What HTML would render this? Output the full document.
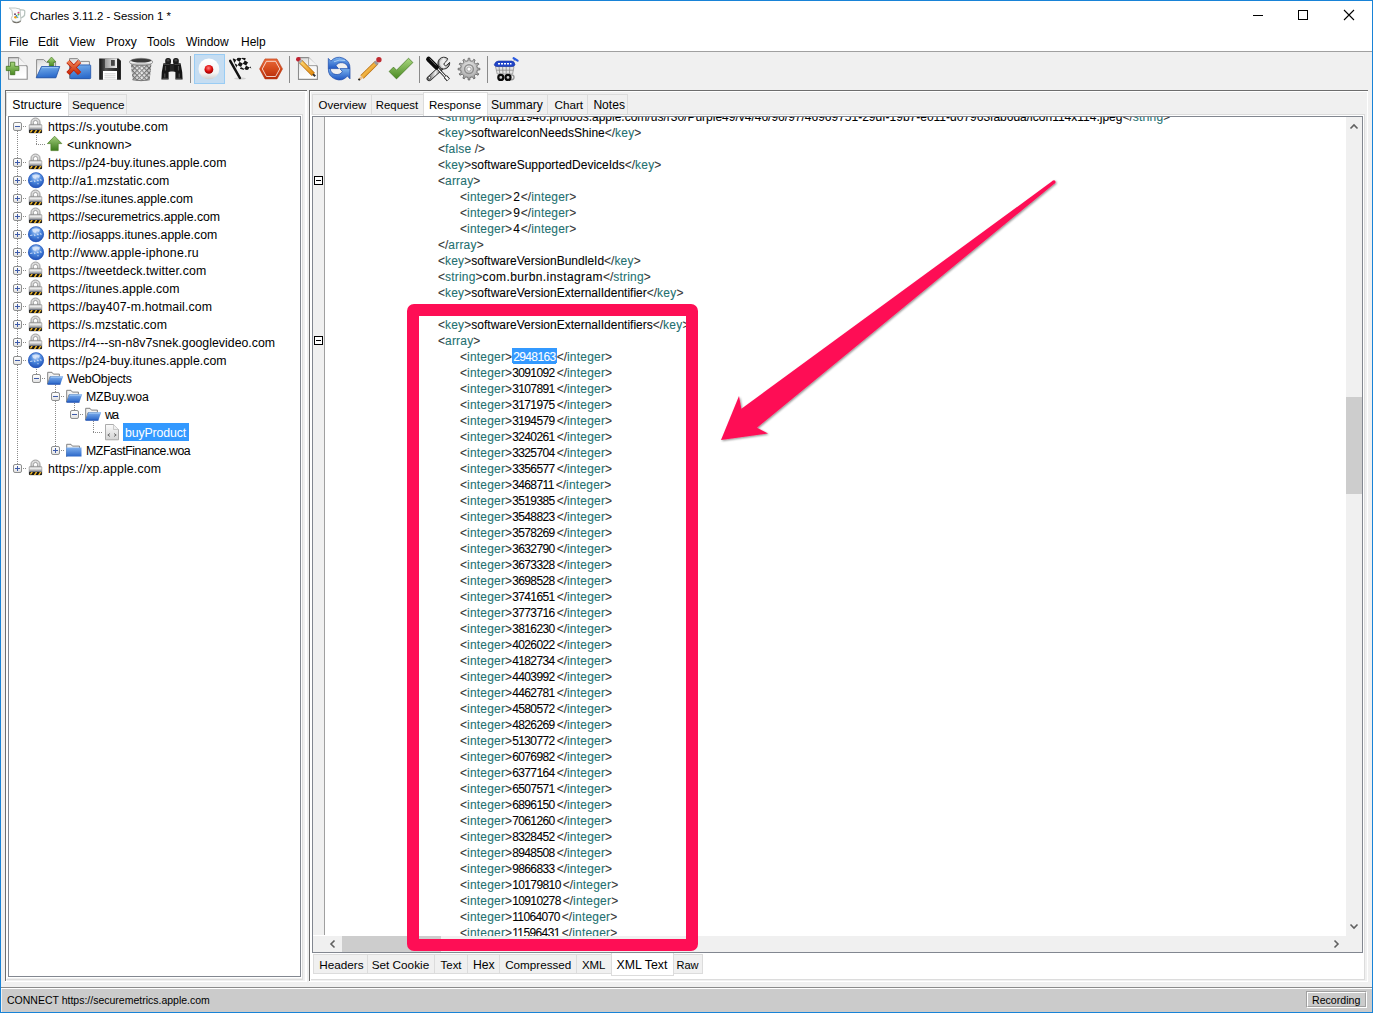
<!DOCTYPE html>
<html><head><meta charset="utf-8">
<style>
*{margin:0;padding:0;box-sizing:border-box}
html,body{width:1373px;height:1013px;overflow:hidden;background:#fff;font-family:"Liberation Sans",sans-serif;color:#000}
.a{position:absolute}
.t{position:absolute;white-space:pre;line-height:16px}
#win{position:absolute;left:0;top:0;width:1373px;height:1013px;border:1px solid #1883d7;background:#f0f0f0}
#title{position:absolute;left:1px;top:1px;width:1371px;height:50px;background:#fff}
.sep{position:absolute;width:1px;background:#8c8c8c}
.tr{font-size:12.3px;line-height:18px}
.x{font-size:12px;line-height:16px;color:#000;-webkit-text-stroke:0.08px currentColor}
.x b{font-weight:normal;color:#333}
.x i{font-style:normal;color:#237070;letter-spacing:0.2px}
.x u{text-decoration:none;letter-spacing:-0.6px;margin-right:2px}
.x u.sel{background:#3399ff;color:#fff;display:inline-block;height:15px;line-height:16px;vertical-align:top;padding:0 1px 0 1px;margin-right:0;box-shadow:0 -1px 0 #3399ff;background-clip:content-box,padding-box}
.exp{width:9px;height:9px;border:1px solid #8e8f8f;border-radius:2px;background:linear-gradient(#fff,#e3e3e3)}
.exp:before{content:"";position:absolute;left:1px;top:3px;width:5px;height:1px;background:#3e5ba9}
.plus:after{content:"";position:absolute;left:3px;top:1px;width:1px;height:5px;background:#3e5ba9}
.tab{background:#f0f0f0;border:1px solid #dcdcdc;border-bottom:none}
.gbox{width:9px;height:9px;border:1px solid #000;background:#fff}
.gbox:before{content:"";position:absolute;left:1px;top:3px;width:5px;height:1px;background:#000}
</style></head><body>
<svg width="0" height="0" style="position:absolute">
<defs>
<linearGradient id="gLockBody" x1="0" y1="0" x2="0" y2="1"><stop offset="0" stop-color="#a8a8a8"/><stop offset="0.22" stop-color="#f0f0f0"/><stop offset="0.45" stop-color="#b4b4b4"/><stop offset="0.6" stop-color="#7a808c"/><stop offset="1" stop-color="#333"/></linearGradient>
<radialGradient id="gGlobe" cx="0.5" cy="0.3" r="0.75"><stop offset="0" stop-color="#c8dcf8"/><stop offset="0.45" stop-color="#4a86dc"/><stop offset="1" stop-color="#1a48b0"/></radialGradient>
<linearGradient id="gArrow" x1="0" y1="0" x2="0" y2="1"><stop offset="0" stop-color="#a3cf7d"/><stop offset="1" stop-color="#3b7a1c"/></linearGradient>
<linearGradient id="gFold" x1="0" y1="0" x2="0" y2="1"><stop offset="0" stop-color="#7fb0ee"/><stop offset="1" stop-color="#2a66c8"/></linearGradient>
<linearGradient id="gPaper" x1="0" y1="0" x2="0" y2="1"><stop offset="0" stop-color="#fbfbfb"/><stop offset="1" stop-color="#d4d4d4"/></linearGradient>
<symbol id="i-lock" viewBox="0 0 18 18">
<path d="M4 8.2V5A4.5 4 0 0 1 13 5V8.2H10.6V5.6A2.1 2.1 0 0 0 6.4 5.6V8.2Z" fill="#dadada" stroke="#8e8e8e" stroke-width="0.8"/>
<rect x="2.2" y="7.4" width="12.6" height="8.6" rx="1" fill="url(#gLockBody)" stroke="#8a8a8a" stroke-width="0.6"/>
<rect x="2.2" y="12.9" width="12.6" height="3.1" fill="#151515"/>
<path d="M2.6 15.6L4.2 12.9H5.9L4.3 15.6ZM6.8 16L8.6 12.9H10.3L8.5 16ZM11 16L12.8 12.9H14.5L12.7 16Z" fill="#f2b82a"/>
</symbol>
<symbol id="i-globe" viewBox="0 0 18 18">
<circle cx="9" cy="9.2" r="7.8" fill="url(#gGlobe)"/>
<path d="M5 4.5Q9 2.5 13 4.5L12 7L9.5 6L8.5 8L6 7Z" fill="#e4eefc" opacity="0.75"/>
<path d="M3.2 10.5L5.5 10M7 9.5L8.2 11M10.2 9L11.5 10M13 8.5L14.5 9.5M10.5 12.5L11.5 13" stroke="#eaf2fe" stroke-width="1.2" opacity="0.8"/>
<circle cx="9" cy="9.2" r="7.6" fill="none" stroke="#2050b8" stroke-width="0.6"/>
</symbol>
<symbol id="i-arrow" viewBox="0 0 18 18">
<path d="M8.6 1.2L1.4 8.6H4.9V15.6H12.2V8.6H15.8Z" fill="url(#gArrow)" stroke="#4b7d22" stroke-width="0.7" stroke-linejoin="round"/>
</symbol>
<symbol id="i-fopen" viewBox="0 0 18 18">
<path d="M1.7 15V3.3H6L7.4 5.1H13.4V7.6H4Z" fill="#f2f2f2" stroke="#767676" stroke-width="0.9"/>
<path d="M1.5 15.2L4.4 7.3H17.2L14.4 15.2Z" fill="url(#gFold)"/><path d="M1.5 15.2H14.4" stroke="#1d4fb0" stroke-width="1"/><path d="M5 8.3H16" stroke="#c0dcfa" stroke-width="0.7" opacity="0.8"/>
</symbol>
<symbol id="i-fclosed" viewBox="0 0 18 18">
<path d="M1.7 15.5V3.3H6L7.4 5.1H14.5V7.6H1.7Z" fill="#f2f2f2" stroke="#767676" stroke-width="0.9"/>
<rect x="1.2" y="6.5" width="15.3" height="9" fill="url(#gFold)"/>
</symbol>
<symbol id="i-doc" viewBox="0 0 18 18">
<path d="M2.5 1.5H10.5L15.5 6.5V16.8H2.5Z" fill="url(#gPaper)" stroke="#a3a3a3" stroke-width="0.9"/>
<path d="M10.5 1.5V6.5H15.5" fill="#eee" stroke="#b0b0b0" stroke-width="0.6"/>
<path d="M7 10.5L4.8 12L7 13.5M11 10.5L13.2 12L11 13.5" fill="none" stroke="#555" stroke-width="0.8"/>
</symbol>
</defs></svg>

<div id="win"></div>
<div id="title"></div>
<svg class="a" style="left:5px;top:3px" width="25" height="25" viewBox="0 0 25 25">
<path d="M4.2 5L7 7.5L7.5 12.5L6.3 15.5L7.5 18Q12 20.5 16 17.5L15.5 12L15 6Q11 4.5 4.2 5Z" fill="#fbfbfb" stroke="#b8c0bc" stroke-width="0.9"/>
<path d="M15 7Q20 6.5 19.8 8.5L19.5 12.5Q18 14 16 15" fill="none" stroke="#b8c4bf" stroke-width="1.3"/>
<path d="M7.2 17.5Q11.5 20.8 16 17.5L15.5 19Q11.5 21.5 7.8 19.2Z" fill="#6e6a62"/>
<circle cx="10.5" cy="14.3" r="1.3" fill="#f0a010"/>
<circle cx="11.5" cy="12.8" r="0.9" fill="#2a7ad0"/>
<circle cx="13.5" cy="9.8" r="1" fill="#e04080"/>
<circle cx="13.5" cy="11.5" r="0.9" fill="#60c040"/>
<circle cx="10" cy="11.2" r="0.9" fill="#603050"/>
<circle cx="12.6" cy="14.3" r="0.8" fill="#40b0c0"/>
</svg>
<!-- title text -->
<div class="t" style="left:30px;top:8px;font-size:11.4px">Charles 3.11.2 - Session 1 *</div>
<!-- menu -->
<div class="t" style="left:9px;top:34px;font-size:12px">File</div>
<div class="t" style="left:38px;top:34px;font-size:12px">Edit</div>
<div class="t" style="left:69px;top:34px;font-size:12px">View</div>
<div class="t" style="left:106px;top:34px;font-size:12px">Proxy</div>
<div class="t" style="left:147px;top:34px;font-size:12px">Tools</div>
<div class="t" style="left:186px;top:34px;font-size:12px">Window</div>
<div class="t" style="left:241px;top:34px;font-size:12px">Help</div>
<div class="a" style="left:1px;top:51px;width:1371px;height:1px;background:#a0a0a0"></div>


<svg class="a" style="left:0;top:52px" width="530" height="36" viewBox="0 52 530 36">
<defs>
<linearGradient id="tgPaper" x1="0" y1="0" x2="0.3" y2="1"><stop offset="0" stop-color="#d8d8d8"/><stop offset="0.5" stop-color="#f4f4f4"/><stop offset="1" stop-color="#ffffff"/></linearGradient>
<linearGradient id="tgGreen" x1="0" y1="0" x2="0" y2="1"><stop offset="0" stop-color="#a8d67e"/><stop offset="1" stop-color="#4a8a22"/></linearGradient>
<linearGradient id="tgBlue" x1="0" y1="0" x2="0.2" y2="1"><stop offset="0" stop-color="#78b0ec"/><stop offset="1" stop-color="#2d6ccc"/></linearGradient>
<linearGradient id="tgRed" x1="0" y1="0" x2="0" y2="1"><stop offset="0" stop-color="#f08050"/><stop offset="1" stop-color="#c82a0a"/></linearGradient>
<linearGradient id="tgDark" x1="0" y1="0" x2="1" y2="0"><stop offset="0" stop-color="#111"/><stop offset="0.3" stop-color="#555"/><stop offset="0.7" stop-color="#333"/><stop offset="1" stop-color="#111"/></linearGradient>
<linearGradient id="tgShut" x1="0" y1="0" x2="1" y2="0"><stop offset="0" stop-color="#9a9a9a"/><stop offset="1" stop-color="#f0f0f0"/></linearGradient>
<linearGradient id="tgMetal" x1="0" y1="0" x2="1" y2="0"><stop offset="0" stop-color="#777"/><stop offset="0.5" stop-color="#eee"/><stop offset="1" stop-color="#666"/></linearGradient>
<linearGradient id="tgWhite" x1="0" y1="0" x2="0" y2="1"><stop offset="0" stop-color="#ffffff"/><stop offset="0.7" stop-color="#f4f4f4"/><stop offset="1" stop-color="#cfcfcf"/></linearGradient>
<linearGradient id="tgRim" x1="0" y1="0" x2="0" y2="1"><stop offset="0" stop-color="#777"/><stop offset="0.55" stop-color="#f4f4f4"/><stop offset="1" stop-color="#8a8a8a"/></linearGradient>
<radialGradient id="tgRedDot" cx="0.45" cy="0.35" r="0.6"><stop offset="0" stop-color="#ff8080"/><stop offset="0.6" stop-color="#e01010"/><stop offset="1" stop-color="#a00000"/></radialGradient>
<linearGradient id="tgHex" x1="0" y1="0" x2="0" y2="1"><stop offset="0" stop-color="#ea6a3a"/><stop offset="0.5" stop-color="#d44a1c"/><stop offset="1" stop-color="#b52a08"/></linearGradient>
<linearGradient id="tgRefresh" x1="0" y1="0" x2="0" y2="1"><stop offset="0" stop-color="#7ab2ee"/><stop offset="1" stop-color="#2058c4"/></linearGradient>
<linearGradient id="tgPencil" x1="0" y1="0" x2="1" y2="1"><stop offset="0" stop-color="#ffd870"/><stop offset="1" stop-color="#e08a10"/></linearGradient>
<radialGradient id="tgGear" cx="0.5" cy="0.4" r="0.6"><stop offset="0" stop-color="#f0f0f0"/><stop offset="1" stop-color="#9a9a9a"/></radialGradient>
<pattern id="tgChk" width="7.6" height="7.6" patternUnits="userSpaceOnUse" patternTransform="translate(233 58) rotate(30)"><rect width="7.6" height="7.6" fill="#f6f6f6"/><rect width="3.8" height="3.8" fill="#151515"/><rect x="3.8" y="3.8" width="3.8" height="3.8" fill="#151515"/></pattern>
<pattern id="tgMesh" width="3.4" height="3.4" patternUnits="userSpaceOnUse" patternTransform="rotate(45)"><rect width="3.4" height="3.4" fill="#f2f2f2"/><rect width="1.1" height="3.4" fill="#5a5a5a"/><rect width="3.4" height="1.1" fill="#5a5a5a"/></pattern>
</defs>
<!-- 1 new doc -->
<path d="M8.6 57.6H18.5L27.2 66.7V79.3H8.6Z" fill="url(#tgPaper)" stroke="#8c8c8c" stroke-width="1.1"/>
<path d="M18.5 57.6V65.6H27.2" fill="#f4f4f4" stroke="#9a9a9a" stroke-width="0.9"/>
<path d="M10.4 62.2H14.8V66.3H18.9V70.6H14.8V74.7H10.4V70.6H6.3V66.3H10.4Z" fill="url(#tgGreen)" stroke="#3f741d" stroke-width="0.8"/>
<!-- 2 open folder -->
<path d="M36.6 77.5V59.6H43.6L46.7 62.4H55.6V77.5Z" fill="url(#tgPaper)" stroke="#8c8c8c" stroke-width="1"/>
<path d="M51.5 57L47 62H49.3V66H53.8V62H56Z" fill="url(#tgGreen)" stroke="#3f741d" stroke-width="0.6"/>
<path d="M36.2 77.8L41.5 66.5H59.8L55.9 77.8Z" fill="url(#tgBlue)" stroke="#1f52a8" stroke-width="0.8"/>
<path d="M42 67.6H58.2" stroke="#a8d0f8" stroke-width="0.8"/>
<!-- 3 close folder -->
<path d="M69.5 78.5V58.6H77.4L80.3 61.4H89.4V78.5Z" fill="url(#tgPaper)" stroke="#8c8c8c" stroke-width="1"/>
<rect x="70.3" y="64.9" width="20.4" height="13.8" rx="0.8" fill="url(#tgBlue)" stroke="#1f52a8" stroke-width="0.8"/>
<path d="M68 61.5L79.5 73.5M79.5 61.5L68 73.5" stroke="#b81c0a" stroke-width="4.6"/>
<path d="M68 61.5L79.5 73.5M79.5 61.5L68 73.5" stroke="url(#tgRed)" stroke-width="3.2"/>
<!-- 4 floppy -->
<path d="M99.2 58.4H118.5L120.9 60.8V79.8H99.2Z" fill="url(#tgDark)"/>
<rect x="105" y="58.4" width="12" height="9.6" fill="url(#tgShut)"/>
<rect x="111" y="60" width="3.8" height="5.8" fill="#444"/>
<rect x="103" y="71" width="14" height="8.8" fill="#fff"/>
<path d="M104.5 73.8H115.5M104.5 75.8H115.5M104.5 77.8H115.5" stroke="#aaa" stroke-width="0.6"/>
<!-- 5 trash -->
<path d="M131 64.5L132.6 79.8Q141 81.6 149.7 79.8L151.3 64.5Z" fill="url(#tgMesh)"/>
<path d="M131 64.5L132.6 79.8Q141 81.6 149.7 79.8L151.3 64.5Z" fill="url(#tgMetal)" opacity="0.35"/>
<path d="M132.6 79.8Q141 81.6 149.7 79.8" fill="none" stroke="#777" stroke-width="1"/>
<ellipse cx="141.1" cy="62" rx="11.7" ry="3.7" fill="url(#tgRim)" stroke="#707070" stroke-width="0.6"/>
<ellipse cx="141.1" cy="60.6" rx="10" ry="1.9" fill="#3a3a3a"/>
<!-- 6 binoculars -->
<rect x="165.2" y="58" width="5.8" height="6.5" rx="2.5" fill="#1e1e1e"/>
<rect x="173" y="58" width="5.8" height="6.5" rx="2.5" fill="#1e1e1e"/>
<circle cx="168.1" cy="60.3" r="1.3" fill="#555" opacity="0.7"/>
<circle cx="175.9" cy="60.3" r="1.3" fill="#555" opacity="0.7"/>
<path d="M163.4 63.2H170.2L170.3 71.5L168.6 72V79.6H161.4L161.8 72Z" fill="#161616"/>
<path d="M173.8 63.2H180.6L182.2 72L182.6 79.6H175.4V72L173.7 71.5Z" fill="#161616"/>
<rect x="169.8" y="64" width="4.4" height="7.5" fill="#262626"/>
<path d="M165.5 66V70.5M178.5 66V70.5M164.8 73.5V77.5M179.2 73.5V77.5" stroke="#5a5a5a" stroke-width="1.2" opacity="0.8"/>
<path d="M163.5 64.4H169.5M174.5 64.4H180.5M162.5 78.4H168M176 78.4H181.5" stroke="#6a6a6a" stroke-width="0.6"/>
<!-- separators -->
<rect x="190" y="56" width="1" height="27" fill="#8a8a8a"/>
<rect x="289" y="56" width="1" height="27" fill="#8a8a8a"/>
<rect x="419" y="56" width="1" height="27" fill="#8a8a8a"/>
<rect x="487" y="56" width="1" height="27" fill="#8a8a8a"/>
<!-- 7 record -->
<rect x="194.5" y="54.5" width="30" height="29" fill="#c5ddf2" stroke="#99ccf4" stroke-width="1"/>
<circle cx="208.9" cy="68.9" r="10.4" fill="url(#tgWhite)"/>
<circle cx="208.9" cy="69.4" r="4.4" fill="url(#tgRedDot)"/>
<!-- 8 flag -->
<ellipse cx="240" cy="78.5" rx="6" ry="1.2" fill="#000" opacity="0.12"/>
<path d="M232.5 58.5Q239 57 245.4 58.1L251.4 68.5Q247.5 70.5 244 70Q240 68.5 236.8 68.8Z" fill="url(#tgChk)"/>
<path d="M230.2 60.8L239.9 78" stroke="#111" stroke-width="2.5" stroke-linecap="round"/>
<!-- 9 hexagon -->
<path d="M259.6 68.9L265 58.9H277L282.5 68.9L277 78.9H265Z" fill="url(#tgHex)" stroke="#b83a14" stroke-width="0.6"/>
<path d="M262.3 68.9L266.4 61.3H275.6L279.8 68.9L275.6 76.5H266.4Z" fill="none" stroke="#fff" stroke-width="0.9" opacity="0.85"/>
<!-- 10 edit doc -->
<path d="M298.5 57.6H308.6L317.4 66.7V79.4H298.5Z" fill="url(#tgPaper)" stroke="#8c8c8c" stroke-width="1.1"/>
<path d="M308.6 57.6V65.6H317.4" fill="#f4f4f4" stroke="#9a9a9a" stroke-width="0.9"/>
<path d="M300.3 61.3L313.3 74.4" stroke="#b86a08" stroke-width="4.4"/>
<path d="M300.3 61.3L313.3 74.4" stroke="url(#tgPencil)" stroke-width="3"/>
<path d="M313 74.1L315.2 76.3" stroke="#333" stroke-width="2"/>
<circle cx="298.4" cy="59.3" r="2.4" fill="#c02030"/>
<path d="M299.6 60.5L301.3 62.2" stroke="#aaa" stroke-width="3.6"/>
<!-- 11 refresh -->
<path d="M328.3 68.6V58.4L330.9 61.1A10.9 10.9 0 0 1 350 68.6H348C348 61.5 337.5 61 336 65.8L338.5 68.6Z" fill="url(#tgRefresh)" stroke="#1846a8" stroke-width="0.7" stroke-linejoin="round"/>
<path d="M350 68.6V78.8L347.4 76.1A10.9 10.9 0 0 1 328.3 68.6H330.3C330.3 75.7 340.8 76.2 342.3 71.4L339.8 68.6Z" fill="url(#tgRefresh)" stroke="#1846a8" stroke-width="0.7" stroke-linejoin="round"/>
<path d="M334 61.8Q339 59 345 60.5" fill="none" stroke="#b8d8fa" stroke-width="1" opacity="0.8"/>
<!-- 12 pencil -->
<path d="M376.6 62.6L362 77" stroke="#b86a08" stroke-width="4.6"/>
<path d="M376.6 62.6L362 77" stroke="url(#tgPencil)" stroke-width="3.2"/>
<path d="M362.3 76.7L359.2 79.6" stroke="#e8c090" stroke-width="2.6"/>
<path d="M359.8 79L358.5 80.2" stroke="#222" stroke-width="1.8"/>
<path d="M377.2 62L375.2 64" stroke="#9a9a9a" stroke-width="4.2"/>
<circle cx="378.9" cy="59.8" r="2.7" fill="#c02a30"/>
<!-- 13 check -->
<path d="M389.1 71.5L393.5 67.1L396.5 70.2L408.5 58.2L412.9 62.5L396.5 78.9Z" fill="url(#tgGreen)" stroke="#3f741d" stroke-width="0.7"/>
<!-- 14 tools -->
<mask id="wrm" maskUnits="userSpaceOnUse" x="420" y="52" width="40" height="36"><rect x="420" y="52" width="40" height="36" fill="#fff"/><path d="M-1.6 -14V0A1.6 1.6 0 0 0 1.6 0V-14Z" transform="translate(445.6 64.1) rotate(45)" fill="#000"/></mask>
<path d="M441.6 67.4L429.2 78.6" stroke="#222" stroke-width="5.2" stroke-linecap="round"/>
<path d="M441.6 67.4L429.2 78.6" stroke="url(#tgMetal)" stroke-width="3.6" stroke-linecap="round"/>
<circle cx="429.5" cy="77.7" r="1.2" fill="#fff" stroke="#333" stroke-width="0.7"/>
<g mask="url(#wrm)"><circle cx="443.8" cy="63.1" r="5.9" fill="url(#tgMetal)" stroke="#222" stroke-width="0.9"/><circle cx="443.8" cy="63.1" r="4.2" fill="#f4f4f4" opacity="0.7"/></g>
<path d="M-1.6 -4.6V0A1.6 1.6 0 0 0 1.6 0V-4.2" transform="translate(445.6 64.1) rotate(45)" fill="none" stroke="#222" stroke-width="0.9"/>
<path d="M437 67.6L446.3 77.6" stroke="#111" stroke-width="2.8"/>
<path d="M437 67.6L446.3 77.6" stroke="#fff" stroke-width="1.1"/>
<path d="M445.4 76.6L448.4 79.8" stroke="#111" stroke-width="4"/>
<path d="M445.6 76.8L448.2 79.6" stroke="#fff" stroke-width="2.3"/>
<path d="M428.6 59.2L436.4 67" stroke="#0a0a0a" stroke-width="5" stroke-linecap="round"/>
<path d="M429.6 58.6L436.2 65.4" stroke="#777" stroke-width="0.9"/>
<!-- 15 gear -->
<g transform="translate(469 69.1)">
<path d="M-2.17 -8.11L-0.97 -8.34L-0.80 -10.87L0.80 -10.87L0.97 -8.34L2.17 -8.11L3.34 -7.71L4.74 -9.81L6.13 -9.02L5.01 -6.74L5.94 -5.94L6.74 -5.01L9.02 -6.13L9.81 -4.74L7.71 -3.34L8.11 -2.17L8.34 -0.97L10.87 -0.80L10.87 0.80L8.34 0.97L8.11 2.17L7.71 3.34L9.81 4.74L9.02 6.13L6.74 5.01L5.94 5.94L5.01 6.74L6.13 9.02L4.74 9.81L3.34 7.71L2.17 8.11L0.97 8.34L0.80 10.87L-0.80 10.87L-0.97 8.34L-2.17 8.11L-3.34 7.71L-4.74 9.81L-6.13 9.02L-5.01 6.74L-5.94 5.94L-6.74 5.01L-9.02 6.13L-9.81 4.74L-7.71 3.34L-8.11 2.17L-8.34 0.97L-10.87 0.80L-10.87 -0.80L-8.34 -0.97L-8.11 -2.17L-7.71 -3.34L-9.81 -4.74L-9.02 -6.13L-6.74 -5.01L-5.94 -5.94L-5.01 -6.74L-6.13 -9.02L-4.74 -9.81L-3.34 -7.71Z" fill="url(#tgGear)" stroke="#6a6a6a" stroke-width="0.9"/>
<circle r="4.4" fill="none" stroke="#8f8f8f" stroke-width="1.5"/>
<circle r="2.1" fill="#fff" stroke="#7a7a7a" stroke-width="0.6"/>
</g>
<!-- 16 cart -->
<path d="M495.5 66.4L497.2 74H512.6L514 66.4Z" fill="#e4e4e4" stroke="#888" stroke-width="0.7"/>
<path d="M499 66.5L499.8 74M502.6 66.5L503 74M506.2 66.5L506.2 74M509.8 66.5L509.4 74M496.3 70.2H513.3" stroke="#8a8a8a" stroke-width="0.8"/>
<path d="M494.2 64.8Q495.5 61 498.5 61H511.6Q514.6 61 515 64.8Q514.5 66.5 512 66.5H497Q494.5 66.5 494.2 64.8Z" fill="#2045c8" stroke="#1530a0" stroke-width="0.6"/>
<path d="M498 63.8H511.5" stroke="#fff" stroke-width="1.5" stroke-dasharray="2 1"/>
<path d="M513.5 61L515.3 59.3" stroke="#888" stroke-width="1"/>
<path d="M513.6 58.2L517.6 60.6" stroke="#2a5ae0" stroke-width="2.2" stroke-linecap="round"/>
<circle cx="511.6" cy="77.3" r="2.4" fill="none" stroke="#999" stroke-width="1.4"/>
<circle cx="500.8" cy="77.4" r="2.5" fill="#ccc" stroke="#0a0a0a" stroke-width="2.2"/>
<circle cx="508" cy="77.4" r="2.5" fill="#ccc" stroke="#0a0a0a" stroke-width="2.2"/>
</svg>

<!-- LEFT PANEL -->
<div class="a" style="left:5px;top:90px;width:302px;height:1px;background:#6d6d6d"></div>
<div class="a" style="left:5px;top:90px;width:1px;height:891px;background:#6d6d6d"></div>
<div class="a" style="left:305px;top:91px;width:2px;height:891px;background:#fff"></div>
<div class="a" style="left:5px;top:981px;width:302px;height:1px;background:#fff"></div>
<div class="a" style="left:6px;top:91px;width:299px;height:1px;background:#fff"></div>
<div class="a" style="left:6px;top:91px;width:1px;height:890px;background:#fff"></div>
<!-- tab content border -->
<div class="a" style="left:6px;top:114px;width:297px;height:866px;border:1px solid #dcdcdc;border-left-color:#fff;border-top-color:#dcdcdc"></div>
<div class="a" style="left:7px;top:115px;width:295px;height:863px;border:1px solid #fff;border-right-color:#fff"></div>
<!-- tabs -->
<div class="a" style="left:7px;top:115px;width:295px;height:1px;background:#fff"></div>
<div class="a" style="left:68px;top:94px;width:59px;height:21px;background:#f0f0f0;border:1px solid #dcdcdc"></div>
<div class="a" style="left:6px;top:92px;width:63px;height:24px;background:#fff;border:1px solid #dcdcdc;border-bottom:none"></div>
<div class="t" style="left:12.3px;top:97px;font-size:12.23px">Structure</div>
<div class="t" style="left:71.9px;top:97px;font-size:11.69px">Sequence</div>
<!-- tree box -->
<div class="a" style="left:8px;top:116px;width:293px;height:861px;background:#fff;border:1px solid #828790"></div>

<!-- RIGHT PANEL -->
<div class="a" style="left:309px;top:90px;width:1059px;height:1px;background:#6d6d6d"></div>
<div class="a" style="left:309px;top:90px;width:1px;height:891px;background:#6d6d6d"></div>
<div class="a" style="left:1367px;top:91px;width:1px;height:891px;background:#fff"></div>
<div class="a" style="left:309px;top:981px;width:1059px;height:1px;background:#fff"></div>
<div class="a" style="left:310px;top:91px;width:1057px;height:1px;background:#fff"></div>
<div class="a" style="left:310px;top:91px;width:1px;height:890px;background:#fff"></div>
<div class="a" style="left:311px;top:114px;width:1054px;height:866px;border:1px solid #dcdcdc;border-left-color:#fff"></div>
<!-- content box -->
<div class="a" style="left:312px;top:116px;width:1051px;height:837px;background:#fff;border:1px solid #828790"></div>
<div class="a" style="left:1363px;top:116px;width:1px;height:838px;background:#fff"></div>
<div class="a" style="left:313px;top:117px;width:11px;height:818px;background:#f0f0f0"></div>
<div class="a" style="left:324px;top:117px;width:1px;height:818px;background:#a0a0a0"></div>
<!-- v scrollbar -->
<div class="a" style="left:1346px;top:117px;width:16px;height:835px;background:#f0f0f0"></div>
<div class="a" style="left:1346px;top:397px;width:16px;height:97px;background:#cdcdcd"></div>
<!-- h scrollbar -->
<div class="a" style="left:313px;top:936px;width:1033px;height:16px;background:#f0f0f0"></div>
<div class="a" style="left:342px;top:936px;width:99px;height:16px;background:#cdcdcd"></div>
<!-- bottom tab area -->
<div class="a" style="left:311px;top:953px;width:1054px;height:26px;background:#fff"></div>
<div class="a" style="left:311px;top:979px;width:1054px;height:1px;background:#dcdcdc"></div>
<div class="a" style="left:1364px;top:114px;width:1px;height:866px;background:#dcdcdc"></div>


<!-- right tabs -->
<div class="a tab" style="left:312px;top:94px;width:60px;height:21px;border-bottom:1px solid #dcdcdc"></div>
<div class="a tab" style="left:371px;top:94px;width:53px;height:21px;border-bottom:1px solid #dcdcdc"></div>
<div class="a tab" style="left:487px;top:94px;width:61px;height:21px;border-bottom:1px solid #dcdcdc"></div>
<div class="a tab" style="left:547px;top:94px;width:41px;height:21px;border-bottom:1px solid #dcdcdc"></div>
<div class="a tab" style="left:587px;top:94px;width:41px;height:21px;border-bottom:1px solid #dcdcdc"></div>
<div class="a" style="left:311px;top:115px;width:1053px;height:1px;background:#fff"></div>
<div class="a tab" style="left:423px;top:92px;width:65px;height:24px;background:#fff"></div>
<div class="t" style="left:318.6px;top:97px;font-size:11.45px">Overview</div>
<div class="t" style="left:375.8px;top:97px;font-size:11.39px">Request</div>
<div class="t" style="left:429.0px;top:97px;font-size:11.57px">Response</div>
<div class="t" style="left:490.9px;top:97px;font-size:12.15px">Summary</div>
<div class="t" style="left:554.5px;top:97px;font-size:11.71px">Chart</div>
<div class="t" style="left:593.4px;top:97px;font-size:12.09px">Notes</div>
<!-- bottom tabs -->
<div class="a tab" style="left:313px;top:954px;width:55px;height:20px;border-bottom:1px solid #dcdcdc"></div>
<div class="a tab" style="left:367px;top:954px;width:68px;height:20px;border-bottom:1px solid #dcdcdc"></div>
<div class="a tab" style="left:434px;top:954px;width:34px;height:20px;border-bottom:1px solid #dcdcdc"></div>
<div class="a tab" style="left:467px;top:954px;width:33px;height:20px;border-bottom:1px solid #dcdcdc"></div>
<div class="a tab" style="left:499px;top:954px;width:78px;height:20px;border-bottom:1px solid #dcdcdc"></div>
<div class="a tab" style="left:576px;top:954px;width:36px;height:20px;border-bottom:1px solid #dcdcdc"></div>
<div class="a tab" style="left:673px;top:954px;width:30px;height:20px;border-bottom:1px solid #dcdcdc"></div>
<div class="a tab" style="left:611px;top:953px;width:63px;height:23px;background:#fff;border-top:none;border-bottom:1px solid #dcdcdc"></div>
<div class="t" style="left:319.2px;top:957px;font-size:11.74px">Headers</div>
<div class="t" style="left:371.7px;top:957px;font-size:11.76px">Set Cookie</div>
<div class="t" style="left:440.6px;top:957px;font-size:11.41px">Text</div>
<div class="t" style="left:472.9px;top:957px;font-size:12.19px">Hex</div>
<div class="t" style="left:505.2px;top:957px;font-size:11.66px">Compressed</div>
<div class="t" style="left:581.9px;top:957px;font-size:11.45px">XML</div>
<div class="t" style="left:616.6px;top:957px;font-size:12.35px">XML Text</div>
<div class="t" style="left:676.4px;top:957px;font-size:11.09px">Raw</div>
<!-- gutter boxes -->
<div class="a gbox" style="left:314px;top:176px"></div>
<div class="a gbox" style="left:314px;top:336px"></div>
<!-- scroll arrows -->
<svg class="a" style="left:1346px;top:117px" width="16" height="18"><path d="M4.5 11.5L8 8L11.5 11.5" fill="none" stroke="#606060" stroke-width="1.6"/></svg>
<svg class="a" style="left:1346px;top:918px" width="16" height="18"><path d="M4.5 6.5L8 10L11.5 6.5" fill="none" stroke="#606060" stroke-width="1.6"/></svg>
<svg class="a" style="left:325px;top:936px" width="16" height="16"><path d="M9.5 4.5L6 8L9.5 11.5" fill="none" stroke="#606060" stroke-width="1.6"/></svg>
<svg class="a" style="left:1328px;top:936px" width="16" height="16"><path d="M6.5 4.5L10 8L6.5 11.5" fill="none" stroke="#606060" stroke-width="1.6"/></svg>
<!-- window controls -->
<div class="a" style="left:1253px;top:15px;width:10px;height:1px;background:#000"></div>
<div class="a" style="left:1298px;top:10px;width:10px;height:10px;border:1px solid #000"></div>
<svg class="a" style="left:1343px;top:9px" width="12" height="12"><path d="M1 1L11 11M11 1L1 11" stroke="#000" stroke-width="1.1"/></svg>

<!-- TREE -->
<div class="a" style="left:17px;top:131px;width:1px;height:333px;background:repeating-linear-gradient(#8a8a8a 0 1px,transparent 1px 2px)"></div>
<div class="a" style="left:36px;top:135px;width:1px;height:9px;background:repeating-linear-gradient(#8a8a8a 0 1px,transparent 1px 2px)"></div>
<div class="a" style="left:36px;top:367px;width:1px;height:7px;background:repeating-linear-gradient(#8a8a8a 0 1px,transparent 1px 2px)"></div>
<div class="a" style="left:55px;top:385px;width:1px;height:61px;background:repeating-linear-gradient(#8a8a8a 0 1px,transparent 1px 2px)"></div>
<div class="a" style="left:55px;top:385px;width:1px;height:61px;background:repeating-linear-gradient(#8a8a8a 0 1px,transparent 1px 2px)"></div>
<div class="a" style="left:74px;top:403px;width:1px;height:7px;background:repeating-linear-gradient(#8a8a8a 0 1px,transparent 1px 2px)"></div>
<div class="a" style="left:93px;top:421px;width:1px;height:11px;background:repeating-linear-gradient(#8a8a8a 0 1px,transparent 1px 2px)"></div>
<div class="a exp minus" style="left:13px;top:122px"></div>
<div class="a" style="left:23px;top:126px;width:4px;height:1px;background:repeating-linear-gradient(90deg,#8a8a8a 0 1px,transparent 1px 2px)"></div>
<svg class="a" style="left:27px;top:117px" width="18" height="18"><use href="#i-lock"/></svg>
<div class="t tr" style="left:48px;top:118px;letter-spacing:0.150px">https://s.youtube.com</div>
<div class="a" style="left:36px;top:144px;width:10px;height:1px;background:repeating-linear-gradient(90deg,#8a8a8a 0 1px,transparent 1px 2px)"></div>
<svg class="a" style="left:46px;top:135px" width="18" height="18"><use href="#i-arrow"/></svg>
<div class="t tr" style="left:67px;top:136px;letter-spacing:0.150px">&lt;unknown&gt;</div>
<div class="a exp plus" style="left:13px;top:158px"></div>
<div class="a" style="left:23px;top:162px;width:4px;height:1px;background:repeating-linear-gradient(90deg,#8a8a8a 0 1px,transparent 1px 2px)"></div>
<svg class="a" style="left:27px;top:153px" width="18" height="18"><use href="#i-lock"/></svg>
<div class="t tr" style="left:48px;top:154px;letter-spacing:0.052px">https://p24-buy.itunes.apple.com</div>
<div class="a exp plus" style="left:13px;top:176px"></div>
<div class="a" style="left:23px;top:180px;width:4px;height:1px;background:repeating-linear-gradient(90deg,#8a8a8a 0 1px,transparent 1px 2px)"></div>
<svg class="a" style="left:27px;top:171px" width="18" height="18"><use href="#i-globe"/></svg>
<div class="t tr" style="left:48px;top:172px;letter-spacing:0.081px">http://a1.mzstatic.com</div>
<div class="a exp plus" style="left:13px;top:194px"></div>
<div class="a" style="left:23px;top:198px;width:4px;height:1px;background:repeating-linear-gradient(90deg,#8a8a8a 0 1px,transparent 1px 2px)"></div>
<svg class="a" style="left:27px;top:189px" width="18" height="18"><use href="#i-lock"/></svg>
<div class="t tr" style="left:48px;top:190px;letter-spacing:-0.050px">https://se.itunes.apple.com</div>
<div class="a exp plus" style="left:13px;top:212px"></div>
<div class="a" style="left:23px;top:216px;width:4px;height:1px;background:repeating-linear-gradient(90deg,#8a8a8a 0 1px,transparent 1px 2px)"></div>
<svg class="a" style="left:27px;top:207px" width="18" height="18"><use href="#i-lock"/></svg>
<div class="t tr" style="left:48px;top:208px;letter-spacing:-0.053px">https://securemetrics.apple.com</div>
<div class="a exp plus" style="left:13px;top:230px"></div>
<div class="a" style="left:23px;top:234px;width:4px;height:1px;background:repeating-linear-gradient(90deg,#8a8a8a 0 1px,transparent 1px 2px)"></div>
<svg class="a" style="left:27px;top:225px" width="18" height="18"><use href="#i-globe"/></svg>
<div class="t tr" style="left:48px;top:226px;letter-spacing:-0.010px">http://iosapps.itunes.apple.com</div>
<div class="a exp plus" style="left:13px;top:248px"></div>
<div class="a" style="left:23px;top:252px;width:4px;height:1px;background:repeating-linear-gradient(90deg,#8a8a8a 0 1px,transparent 1px 2px)"></div>
<svg class="a" style="left:27px;top:243px" width="18" height="18"><use href="#i-globe"/></svg>
<div class="t tr" style="left:48px;top:244px;letter-spacing:0.204px">http://www.apple-iphone.ru</div>
<div class="a exp plus" style="left:13px;top:266px"></div>
<div class="a" style="left:23px;top:270px;width:4px;height:1px;background:repeating-linear-gradient(90deg,#8a8a8a 0 1px,transparent 1px 2px)"></div>
<svg class="a" style="left:27px;top:261px" width="18" height="18"><use href="#i-lock"/></svg>
<div class="t tr" style="left:48px;top:262px;letter-spacing:0.132px">https://tweetdeck.twitter.com</div>
<div class="a exp plus" style="left:13px;top:284px"></div>
<div class="a" style="left:23px;top:288px;width:4px;height:1px;background:repeating-linear-gradient(90deg,#8a8a8a 0 1px,transparent 1px 2px)"></div>
<svg class="a" style="left:27px;top:279px" width="18" height="18"><use href="#i-lock"/></svg>
<div class="t tr" style="left:48px;top:280px;letter-spacing:0.065px">https://itunes.apple.com</div>
<div class="a exp plus" style="left:13px;top:302px"></div>
<div class="a" style="left:23px;top:306px;width:4px;height:1px;background:repeating-linear-gradient(90deg,#8a8a8a 0 1px,transparent 1px 2px)"></div>
<svg class="a" style="left:27px;top:297px" width="18" height="18"><use href="#i-lock"/></svg>
<div class="t tr" style="left:48px;top:298px;letter-spacing:0.096px">https://bay407-m.hotmail.com</div>
<div class="a exp plus" style="left:13px;top:320px"></div>
<div class="a" style="left:23px;top:324px;width:4px;height:1px;background:repeating-linear-gradient(90deg,#8a8a8a 0 1px,transparent 1px 2px)"></div>
<svg class="a" style="left:27px;top:315px" width="18" height="18"><use href="#i-lock"/></svg>
<div class="t tr" style="left:48px;top:316px;letter-spacing:0.033px">https://s.mzstatic.com</div>
<div class="a exp plus" style="left:13px;top:338px"></div>
<div class="a" style="left:23px;top:342px;width:4px;height:1px;background:repeating-linear-gradient(90deg,#8a8a8a 0 1px,transparent 1px 2px)"></div>
<svg class="a" style="left:27px;top:333px" width="18" height="18"><use href="#i-lock"/></svg>
<div class="t tr" style="left:48px;top:334px;letter-spacing:0.021px">https://r4---sn-n8v7snek.googlevideo.com</div>
<div class="a exp minus" style="left:13px;top:356px"></div>
<div class="a" style="left:23px;top:360px;width:4px;height:1px;background:repeating-linear-gradient(90deg,#8a8a8a 0 1px,transparent 1px 2px)"></div>
<svg class="a" style="left:27px;top:351px" width="18" height="18"><use href="#i-globe"/></svg>
<div class="t tr" style="left:48px;top:352px;letter-spacing:0.058px">https://p24-buy.itunes.apple.com</div>
<div class="a exp minus" style="left:32px;top:374px"></div>
<div class="a" style="left:42px;top:378px;width:4px;height:1px;background:repeating-linear-gradient(90deg,#8a8a8a 0 1px,transparent 1px 2px)"></div>
<svg class="a" style="left:46px;top:369px" width="18" height="18"><use href="#i-fopen"/></svg>
<div class="t tr" style="left:67px;top:370px;letter-spacing:-0.200px">WebObjects</div>
<div class="a exp minus" style="left:51px;top:392px"></div>
<div class="a" style="left:61px;top:396px;width:4px;height:1px;background:repeating-linear-gradient(90deg,#8a8a8a 0 1px,transparent 1px 2px)"></div>
<svg class="a" style="left:65px;top:387px" width="18" height="18"><use href="#i-fopen"/></svg>
<div class="t tr" style="left:86px;top:388px;letter-spacing:-0.150px">MZBuy.woa</div>
<div class="a exp minus" style="left:70px;top:410px"></div>
<div class="a" style="left:80px;top:414px;width:4px;height:1px;background:repeating-linear-gradient(90deg,#8a8a8a 0 1px,transparent 1px 2px)"></div>
<svg class="a" style="left:84px;top:405px" width="18" height="18"><use href="#i-fopen"/></svg>
<div class="t tr" style="left:105px;top:406px;letter-spacing:-1.600px">wa</div>
<div class="a" style="left:93px;top:432px;width:10px;height:1px;background:repeating-linear-gradient(90deg,#8a8a8a 0 1px,transparent 1px 2px)"></div>
<svg class="a" style="left:103px;top:423px" width="18" height="18"><use href="#i-doc"/></svg>
<div class="a" style="left:123px;top:423px;width:66px;height:18px;background:#3399ff"></div>
<div class="t tr" style="left:125px;top:424px;color:#fff;letter-spacing:-0.122px">buyProduct</div>
<div class="a exp plus" style="left:51px;top:446px"></div>
<div class="a" style="left:61px;top:450px;width:4px;height:1px;background:repeating-linear-gradient(90deg,#8a8a8a 0 1px,transparent 1px 2px)"></div>
<svg class="a" style="left:65px;top:441px" width="18" height="18"><use href="#i-fclosed"/></svg>
<div class="t tr" style="left:86px;top:442px;letter-spacing:-0.419px">MZFastFinance.woa</div>
<div class="a exp plus" style="left:13px;top:464px"></div>
<div class="a" style="left:23px;top:468px;width:4px;height:1px;background:repeating-linear-gradient(90deg,#8a8a8a 0 1px,transparent 1px 2px)"></div>
<svg class="a" style="left:27px;top:459px" width="18" height="18"><use href="#i-lock"/></svg>
<div class="t tr" style="left:48px;top:460px;letter-spacing:0.153px">https://xp.apple.com</div>
<!-- XML -->
<div class="a" style="left:325px;top:117px;width:1021px;height:819px;overflow:hidden">
<div class="t x" style="left:113px;top:-8px"><b>&lt;</b><i>string</i><b>&gt;</b>http://a1940.phobos.apple.com/us/r30/Purple49/v4/46/96/97/46969751-29df-19b7-e011-d07963fab6da/icon114x114.jpeg<b>&lt;/</b><i>string</i><b>&gt;</b></div>
<div class="t x" style="left:113px;top:8px"><b>&lt;</b><i>key</i><b>&gt;</b>softwareIconNeedsShine<b>&lt;/</b><i>key</i><b>&gt;</b></div>
<div class="t x" style="left:113px;top:24px"><b>&lt;</b><i>false</i><b> /&gt;</b></div>
<div class="t x" style="left:113px;top:40px"><b>&lt;</b><i>key</i><b>&gt;</b>softwareSupportedDeviceIds<b>&lt;/</b><i>key</i><b>&gt;</b></div>
<div class="t x" style="left:113px;top:56px"><b>&lt;</b><i>array</i><b>&gt;</b></div>
<div class="t x" style="left:135px;top:72px"><b>&lt;</b><i>integer</i><b>&gt;</b><u style="letter-spacing:0;margin:0 1px 0 1px">2</u><b>&lt;/</b><i>integer</i><b>&gt;</b></div>
<div class="t x" style="left:135px;top:88px"><b>&lt;</b><i>integer</i><b>&gt;</b><u style="letter-spacing:0;margin:0 1px 0 1px">9</u><b>&lt;/</b><i>integer</i><b>&gt;</b></div>
<div class="t x" style="left:135px;top:104px"><b>&lt;</b><i>integer</i><b>&gt;</b><u style="letter-spacing:0;margin:0 1px 0 1px">4</u><b>&lt;/</b><i>integer</i><b>&gt;</b></div>
<div class="t x" style="left:113px;top:120px"><b>&lt;/</b><i>array</i><b>&gt;</b></div>
<div class="t x" style="left:113px;top:136px"><b>&lt;</b><i>key</i><b>&gt;</b>softwareVersionBundleId<b>&lt;/</b><i>key</i><b>&gt;</b></div>
<div class="t x" style="left:113px;top:152px"><b>&lt;</b><i>string</i><b>&gt;</b><span style="letter-spacing:0.4px">com.burbn.instagram</span><b>&lt;/</b><i>string</i><b>&gt;</b></div>
<div class="t x" style="left:113px;top:168px"><b>&lt;</b><i>key</i><b>&gt;</b>softwareVersionExternalIdentifier<b>&lt;/</b><i>key</i><b>&gt;</b></div>
<div class="t x" style="left:113px;top:184px"><b>&lt;</b><i>integer</i><b>&gt;</b>11596431<b>&lt;/</b><i>integer</i><b>&gt;</b></div>
<div class="t x" style="left:113px;top:200px"><b>&lt;</b><i>key</i><b>&gt;</b>softwareVersionExternalIdentifiers<b>&lt;/</b><i>key</i><b>&gt;</b></div>
<div class="t x" style="left:113px;top:216px"><b>&lt;</b><i>array</i><b>&gt;</b></div>
<div class="t x" style="left:135px;top:232px"><b>&lt;</b><i>integer</i><b>&gt;</b><u class="sel">2948163</u><b>&lt;/</b><i>integer</i><b>&gt;</b></div>
<div class="t x" style="left:135px;top:248px"><b>&lt;</b><i>integer</i><b>&gt;</b><u>3091092</u><b>&lt;/</b><i>integer</i><b>&gt;</b></div>
<div class="t x" style="left:135px;top:264px"><b>&lt;</b><i>integer</i><b>&gt;</b><u>3107891</u><b>&lt;/</b><i>integer</i><b>&gt;</b></div>
<div class="t x" style="left:135px;top:280px"><b>&lt;</b><i>integer</i><b>&gt;</b><u>3171975</u><b>&lt;/</b><i>integer</i><b>&gt;</b></div>
<div class="t x" style="left:135px;top:296px"><b>&lt;</b><i>integer</i><b>&gt;</b><u>3194579</u><b>&lt;/</b><i>integer</i><b>&gt;</b></div>
<div class="t x" style="left:135px;top:312px"><b>&lt;</b><i>integer</i><b>&gt;</b><u>3240261</u><b>&lt;/</b><i>integer</i><b>&gt;</b></div>
<div class="t x" style="left:135px;top:328px"><b>&lt;</b><i>integer</i><b>&gt;</b><u>3325704</u><b>&lt;/</b><i>integer</i><b>&gt;</b></div>
<div class="t x" style="left:135px;top:344px"><b>&lt;</b><i>integer</i><b>&gt;</b><u>3356577</u><b>&lt;/</b><i>integer</i><b>&gt;</b></div>
<div class="t x" style="left:135px;top:360px"><b>&lt;</b><i>integer</i><b>&gt;</b><u>3468711</u><b>&lt;/</b><i>integer</i><b>&gt;</b></div>
<div class="t x" style="left:135px;top:376px"><b>&lt;</b><i>integer</i><b>&gt;</b><u>3519385</u><b>&lt;/</b><i>integer</i><b>&gt;</b></div>
<div class="t x" style="left:135px;top:392px"><b>&lt;</b><i>integer</i><b>&gt;</b><u>3548823</u><b>&lt;/</b><i>integer</i><b>&gt;</b></div>
<div class="t x" style="left:135px;top:408px"><b>&lt;</b><i>integer</i><b>&gt;</b><u>3578269</u><b>&lt;/</b><i>integer</i><b>&gt;</b></div>
<div class="t x" style="left:135px;top:424px"><b>&lt;</b><i>integer</i><b>&gt;</b><u>3632790</u><b>&lt;/</b><i>integer</i><b>&gt;</b></div>
<div class="t x" style="left:135px;top:440px"><b>&lt;</b><i>integer</i><b>&gt;</b><u>3673328</u><b>&lt;/</b><i>integer</i><b>&gt;</b></div>
<div class="t x" style="left:135px;top:456px"><b>&lt;</b><i>integer</i><b>&gt;</b><u>3698528</u><b>&lt;/</b><i>integer</i><b>&gt;</b></div>
<div class="t x" style="left:135px;top:472px"><b>&lt;</b><i>integer</i><b>&gt;</b><u>3741651</u><b>&lt;/</b><i>integer</i><b>&gt;</b></div>
<div class="t x" style="left:135px;top:488px"><b>&lt;</b><i>integer</i><b>&gt;</b><u>3773716</u><b>&lt;/</b><i>integer</i><b>&gt;</b></div>
<div class="t x" style="left:135px;top:504px"><b>&lt;</b><i>integer</i><b>&gt;</b><u>3816230</u><b>&lt;/</b><i>integer</i><b>&gt;</b></div>
<div class="t x" style="left:135px;top:520px"><b>&lt;</b><i>integer</i><b>&gt;</b><u>4026022</u><b>&lt;/</b><i>integer</i><b>&gt;</b></div>
<div class="t x" style="left:135px;top:536px"><b>&lt;</b><i>integer</i><b>&gt;</b><u>4182734</u><b>&lt;/</b><i>integer</i><b>&gt;</b></div>
<div class="t x" style="left:135px;top:552px"><b>&lt;</b><i>integer</i><b>&gt;</b><u>4403992</u><b>&lt;/</b><i>integer</i><b>&gt;</b></div>
<div class="t x" style="left:135px;top:568px"><b>&lt;</b><i>integer</i><b>&gt;</b><u>4462781</u><b>&lt;/</b><i>integer</i><b>&gt;</b></div>
<div class="t x" style="left:135px;top:584px"><b>&lt;</b><i>integer</i><b>&gt;</b><u>4580572</u><b>&lt;/</b><i>integer</i><b>&gt;</b></div>
<div class="t x" style="left:135px;top:600px"><b>&lt;</b><i>integer</i><b>&gt;</b><u>4826269</u><b>&lt;/</b><i>integer</i><b>&gt;</b></div>
<div class="t x" style="left:135px;top:616px"><b>&lt;</b><i>integer</i><b>&gt;</b><u>5130772</u><b>&lt;/</b><i>integer</i><b>&gt;</b></div>
<div class="t x" style="left:135px;top:632px"><b>&lt;</b><i>integer</i><b>&gt;</b><u>6076982</u><b>&lt;/</b><i>integer</i><b>&gt;</b></div>
<div class="t x" style="left:135px;top:648px"><b>&lt;</b><i>integer</i><b>&gt;</b><u>6377164</u><b>&lt;/</b><i>integer</i><b>&gt;</b></div>
<div class="t x" style="left:135px;top:664px"><b>&lt;</b><i>integer</i><b>&gt;</b><u>6507571</u><b>&lt;/</b><i>integer</i><b>&gt;</b></div>
<div class="t x" style="left:135px;top:680px"><b>&lt;</b><i>integer</i><b>&gt;</b><u>6896150</u><b>&lt;/</b><i>integer</i><b>&gt;</b></div>
<div class="t x" style="left:135px;top:696px"><b>&lt;</b><i>integer</i><b>&gt;</b><u>7061260</u><b>&lt;/</b><i>integer</i><b>&gt;</b></div>
<div class="t x" style="left:135px;top:712px"><b>&lt;</b><i>integer</i><b>&gt;</b><u>8328452</u><b>&lt;/</b><i>integer</i><b>&gt;</b></div>
<div class="t x" style="left:135px;top:728px"><b>&lt;</b><i>integer</i><b>&gt;</b><u>8948508</u><b>&lt;/</b><i>integer</i><b>&gt;</b></div>
<div class="t x" style="left:135px;top:744px"><b>&lt;</b><i>integer</i><b>&gt;</b><u>9866833</u><b>&lt;/</b><i>integer</i><b>&gt;</b></div>
<div class="t x" style="left:135px;top:760px"><b>&lt;</b><i>integer</i><b>&gt;</b><u>10179810</u><b>&lt;/</b><i>integer</i><b>&gt;</b></div>
<div class="t x" style="left:135px;top:776px"><b>&lt;</b><i>integer</i><b>&gt;</b><u>10910278</u><b>&lt;/</b><i>integer</i><b>&gt;</b></div>
<div class="t x" style="left:135px;top:792px"><b>&lt;</b><i>integer</i><b>&gt;</b><u>11064070</u><b>&lt;/</b><i>integer</i><b>&gt;</b></div>
<div class="t x" style="left:135px;top:808px"><b>&lt;</b><i>integer</i><b>&gt;</b><u>11596431</u><b>&lt;/</b><i>integer</i><b>&gt;</b></div>
</div>

<!-- red box -->
<div class="a" style="left:407px;top:304px;width:291px;height:647px;border:12px solid #fe0e55;border-radius:7px 7px 7px 7px"></div>
<div class="a" style="left:419px;top:316px;width:267px;height:623px;border-radius:0"></div>
<!-- arrow -->
<svg class="a" style="left:0;top:0" width="1373" height="1013">
<defs><filter id="ash" x="-20%" y="-20%" width="140%" height="140%"><feGaussianBlur in="SourceAlpha" stdDeviation="1"/><feOffset dx="1.2" dy="1.4" result="b"/><feComponentTransfer><feFuncA type="linear" slope="0.45"/></feComponentTransfer><feMerge><feMergeNode/><feMergeNode in="SourceGraphic"/></feMerge></filter></defs>
<g filter="url(#ash)">
<path d="M1053.1 180.6L741.4 408.7L739 396L721 440L768 433.5L757 427.7L1054.9 183.2Z" fill="#fe0e55"/>
<circle cx="1054" cy="181.9" r="1.6" fill="#fe0e55"/>
</g>
</svg>

<!-- status bar -->
<div class="a" style="left:1px;top:987px;width:1371px;height:1px;background:#8a8a8a"></div>
<div class="a" style="left:1px;top:988px;width:1371px;height:1px;background:#fff"></div>
<div class="a" style="left:2px;top:989px;width:1370px;height:23px;background:#cbcbcb"></div>
<div class="t" style="left:7px;top:992px;font-size:10.5px">CONNECT https://securemetrics.apple.com</div>
<!-- recording -->
<div class="a" style="left:1306px;top:991px;width:61px;height:17px;border:1px solid #a0a0a0;border-right-color:#fff;border-bottom-color:#fff"></div>
<div class="a" style="left:1307px;top:992px;width:59px;height:15px;border:1px solid #fff;border-right-color:#a0a0a0;border-bottom-color:#a0a0a0"></div>
<div class="t" style="left:1312px;top:992px;font-size:10.6px">Recording</div>
</body></html>
